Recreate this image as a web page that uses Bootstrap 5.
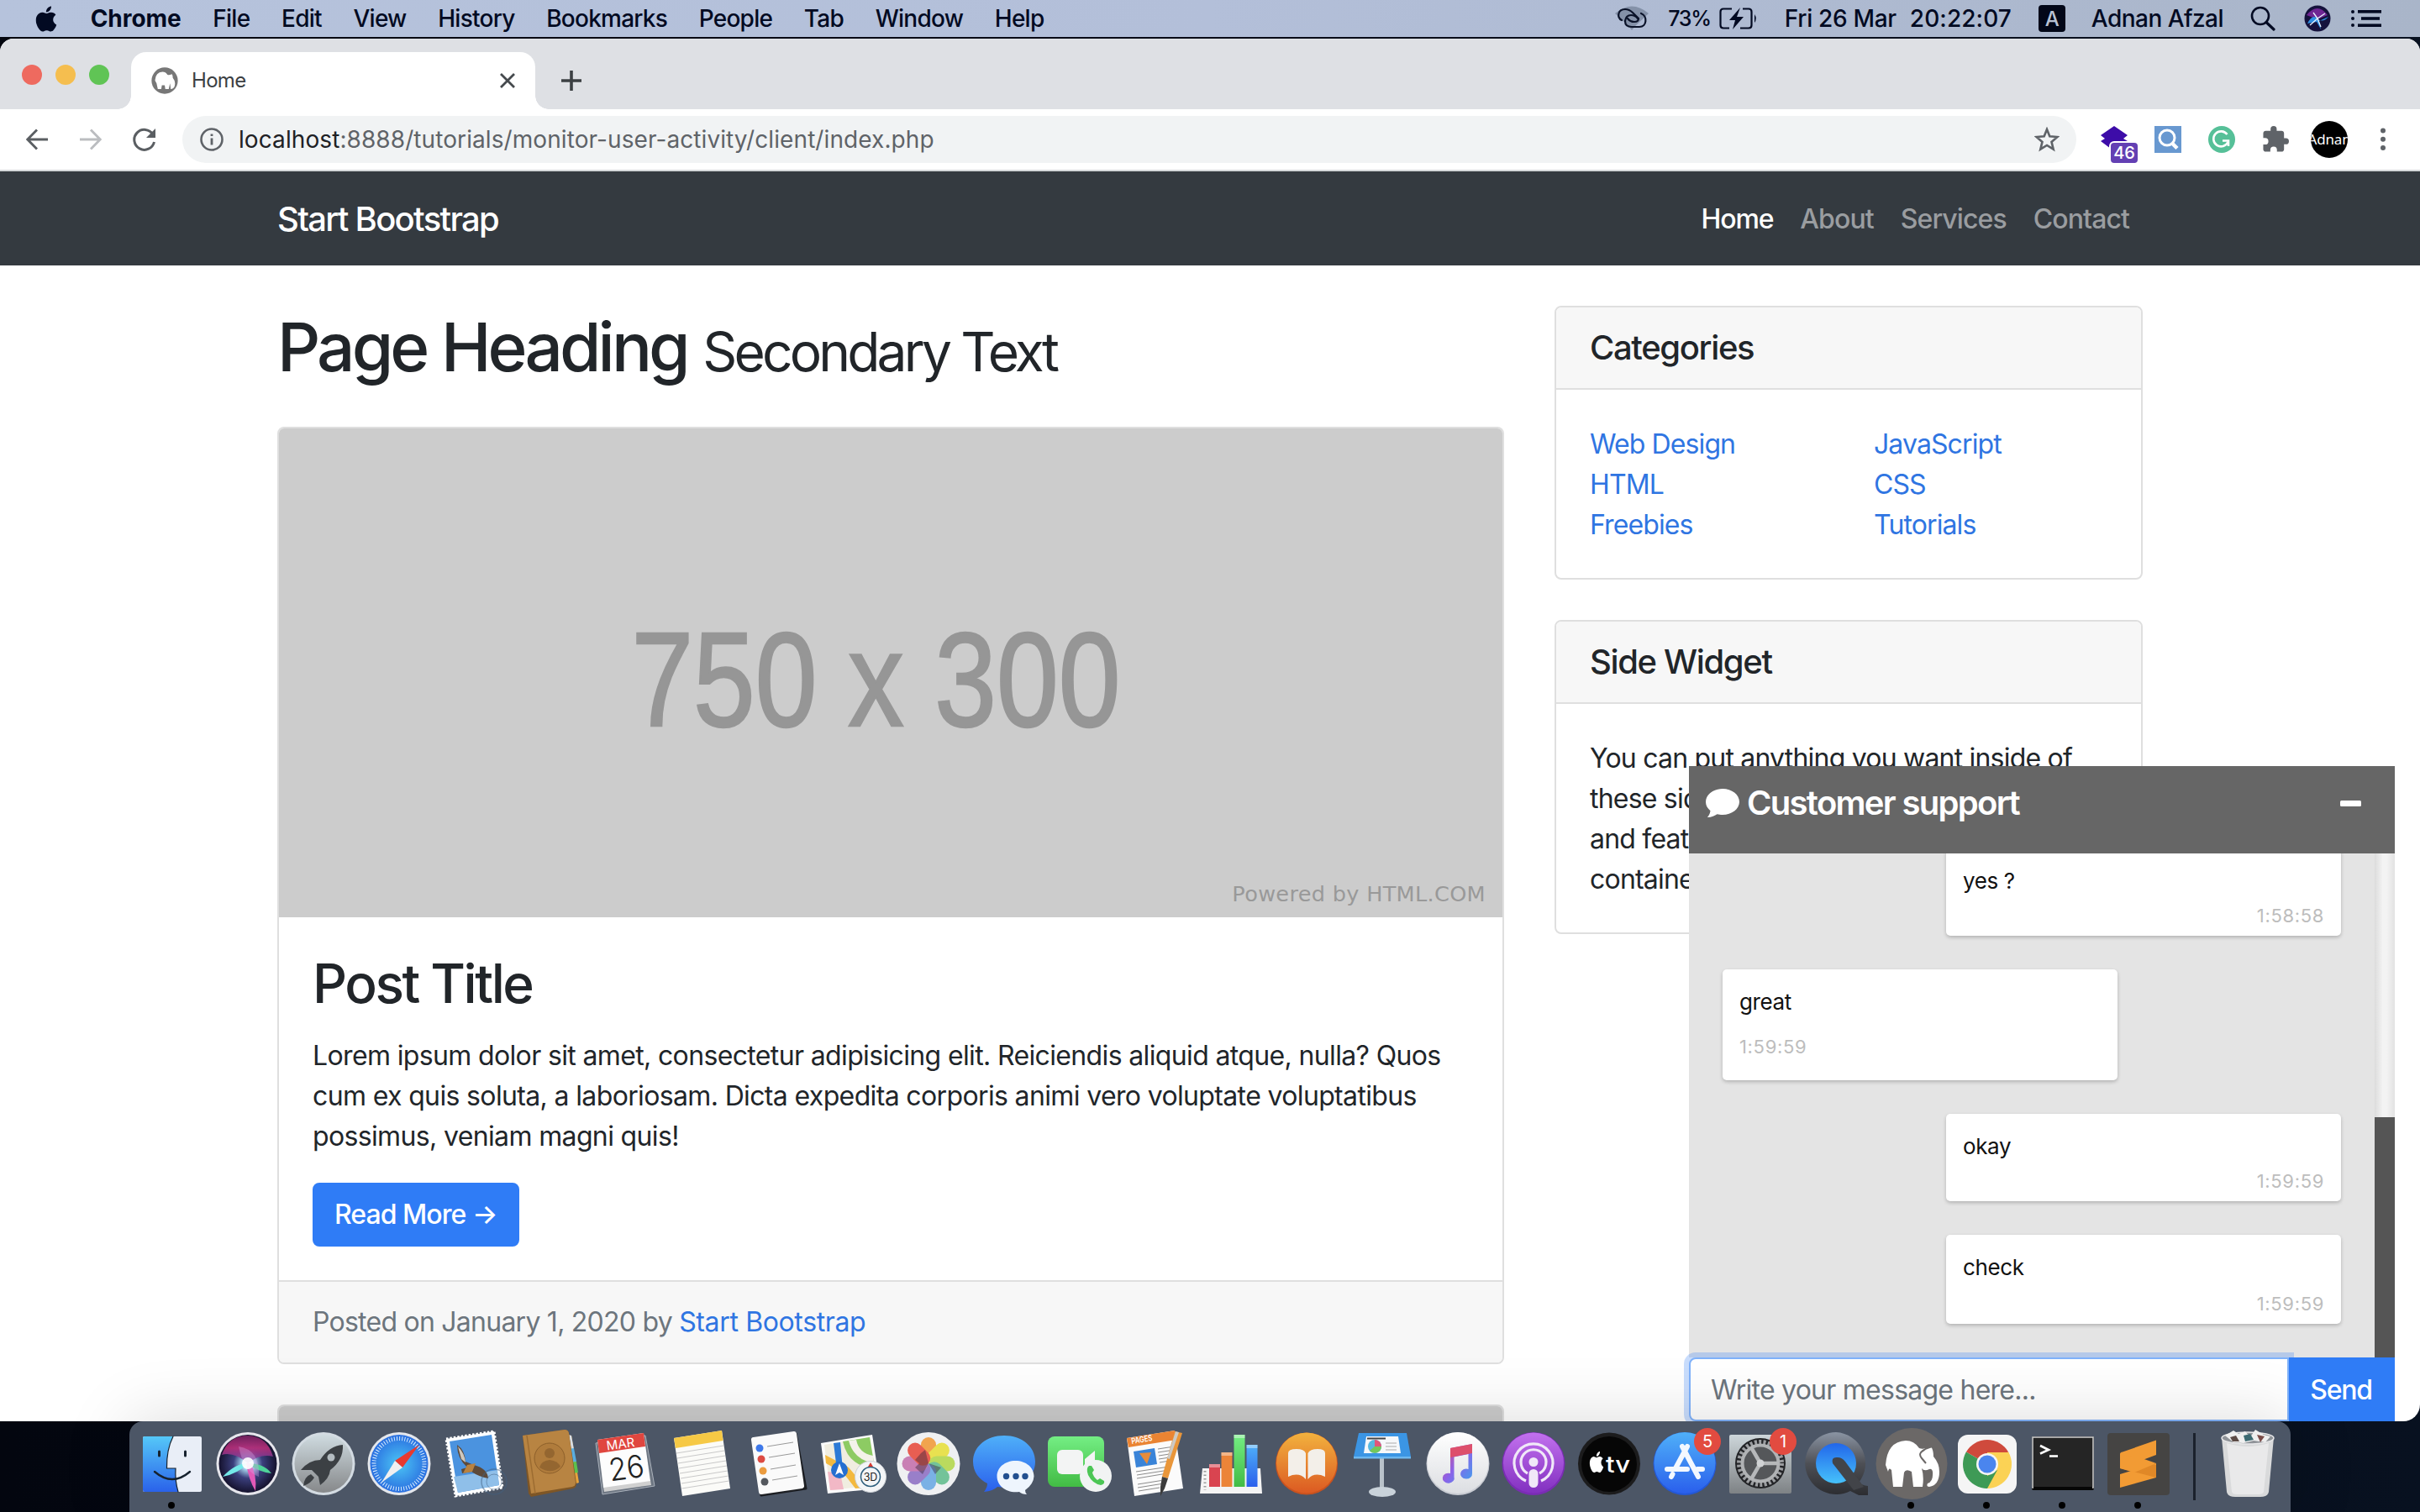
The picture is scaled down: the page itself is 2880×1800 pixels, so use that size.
<!DOCTYPE html>
<html lang="en">
<head>
<meta charset="utf-8">
<title>Home</title>
<link href="https://cdn.jsdelivr.net/npm/bootstrap@5.3.0/dist/css/bootstrap.min.css" rel="stylesheet">
<style>
html{font-size:32px}
body{width:2880px;height:1800px;overflow:hidden;font-family:Inter,Roboto,"Liberation Sans",sans-serif;letter-spacing:-.0215em;color:#212529;background:linear-gradient(90deg,#03060f,#050a16 50%,#081120)}
svg{display:block;flex:none}
a{color:#2f75e2;text-decoration:none}
.defs{position:absolute}
/* menu bar */
.menubar{height:44px;font-size:28px;line-height:44px;padding:0 46px 0 40px;background:linear-gradient(90deg,#b6c3dc,#b3bfd9 50%,#a9b5c9);color:#020a22;font-weight:450;letter-spacing:-.025em}
.menubar>div>span{white-space:pre}
.menus{gap:37.7px}
.menus .appname{font-weight:700;letter-spacing:-.002em}
.menus span+span{letter-spacing:-.027em}
.battery-pct{font-size:25px;letter-spacing:-.05em;margin:0 10px 0 23px}
/* browser window */
.browser{height:1646px;margin-top:2px;border-radius:16px 16px 20px 0;overflow:hidden;background:#fff}
.tabstrip{height:84px;background:#dee0e4;padding:16px 0 0 26px}
.light{width:24px;height:24px;border-radius:50%;margin-right:16px;margin-top:15px}
.pagetab{width:481px;height:68px;background:#fff;border-radius:18px 18px 0 0;margin-left:10px;padding:0 23px 0 24px;font-size:24px;position:relative;color:#3c4043}
.pagetab::before,.pagetab::after{content:"";position:absolute;bottom:0;width:16px;height:16px}
.pagetab::before{left:-16px;background:radial-gradient(circle at 0 0,transparent 15.5px,#fff 16px)}
.pagetab::after{right:-16px;background:radial-gradient(circle at 100% 0,transparent 15.5px,#fff 16px)}
.toolbar{height:74px;padding:0 12px;border-bottom:2px solid #d5d8da}
.cell{width:64px;height:72px;display:flex;align-items:center;justify-content:center;position:relative;flex:none}
.omnibox{height:56px;border-radius:28px;background:#f1f3f4;margin:0 13px 0 13px;padding:0 20px 0 21px;font-size:28px;color:#5f6368;letter-spacing:.003em}
.omnibox b{font-weight:400;color:#202124}
.extcount{position:absolute;left:28px;top:40px;width:32px;height:24px;border-radius:4px;background:#6340b3;box-shadow:0 0 0 2px #fff;color:#fff;font-size:20px;line-height:24px;text-align:center;font-weight:500;letter-spacing:0}
.avatar{width:44px;height:44px;border-radius:50%;background:#000;color:#fff;font-size:17px;display:flex;align-items:center;justify-content:center;overflow:hidden;font-family:"Noto Sans",sans-serif;letter-spacing:-.01em}
/* page */
.site{height:1488px;position:relative;overflow:hidden}
.container{max-width:2280px;--bs-gutter-x:60px}
.row{--bs-gutter-x:60px}
.site .navbar{background:#343a40;padding:17px 0 15px;height:112px}
.navbar-brand{font-size:40px;letter-spacing:-.0425em;font-weight:450}
.navbar .nav-link{padding:8px 16px!important;color:#9a9da0;letter-spacing:-.0285em;font-weight:450}
.navbar .nav-link.active{color:#fff;letter-spacing:-.036em;font-weight:500}
h1{font-size:80px;letter-spacing:-.0485em;margin:48px 0;line-height:96px;height:96px;padding-top:1px}
h1 small{font-size:64px;font-weight:400;letter-spacing:-.06em;line-height:1;margin-left:1px}
.card{--bs-card-border-width:2px;--bs-card-spacer-x:40px;--bs-card-spacer-y:40px;--bs-card-cap-padding-x:40px;--bs-card-cap-padding-y:24px;--bs-card-border-radius:8px;--bs-card-inner-border-radius:6px;--bs-card-cap-bg:#f7f7f7;--bs-card-border-color:#dfdfdf;margin-bottom:48px}
.placeholder-img{height:582.4px;background:#ccc;border-radius:6px 6px 0 0;position:relative;color:#969696;padding:15px 36px 0 0}
.placeholder-img .dims{font:160px "Liberation Sans",sans-serif;letter-spacing:0;transform:scaleX(.828);white-space:nowrap;-webkit-text-stroke:2.5px #969696}
.placeholder-img .by{position:absolute;right:20px;bottom:13px;font:25.6px "DejaVu Sans",sans-serif;letter-spacing:.3px;color:#999}
.card-title{font-size:64px;line-height:76.8px;margin-bottom:24px;letter-spacing:-.0385em;position:relative;top:1px}
.card-text{margin-bottom:31px;letter-spacing:-.02em}
.btn-primary{--bs-btn-bg:#2f7cf6;--bs-btn-border-color:#2f7cf6;border-radius:8px;padding:12px 24px;line-height:48px;border-width:2px;letter-spacing:-.03em;font-weight:450}
.card-footer{color:#6c757d;letter-spacing:-.0235em;line-height:48px}
.card-footer a{letter-spacing:-.0115em}
h5.card-header{font-size:40px;letter-spacing:-.034em;line-height:48px;margin:0}
.side .card:first-child{margin-top:48px}
.catlinks{letter-spacing:-.028em;padding-top:1px;margin-bottom:-1px}
.widget-text{letter-spacing:-.0248em;padding-top:41px;padding-bottom:39px}
/* chat */
.chat{position:absolute;left:2010px;top:708px;width:840px;height:780px}
.chat-head{height:104px;background:#666;color:#fff;font-size:40px;font-weight:600;letter-spacing:-.0424em;padding:0 40px 16px 20px}
.chat-log{height:600px;background:#e4e4e4}
.msgs{overflow:hidden;padding:0 40px 40px;gap:40px}
.msg{width:470px;background:#fff;border-radius:5px;box-shadow:0 2px 4px rgba(0,0,0,.22);padding:20px;font-size:26px;line-height:37px;flex:none;color:#111;letter-spacing:-.015em}
.msg time{display:block;font-size:22px;line-height:33px;color:#bdbdbd;letter-spacing:.03em;margin-top:7px}
.me{align-self:flex-end;height:104px}
.me time{text-align:right}
.them{height:132px}.them time{margin-top:19px}
.me.tall{height:106px}.me.tall time{margin-top:9px}
.track{width:24px;background:linear-gradient(90deg,#dcdcdc,#f3f3f3 40%,#f3f3f3 60%,#e2e2e2)}
.thumb{height:286px;background:#555}
.entry{width:714px;height:76px;border:2px solid #80b2fa;border-radius:8px 0 0 8px;box-shadow:0 0 0 6px rgba(47,124,246,.26);padding:1px 24px 0;color:#6c757d;background:#fff;letter-spacing:-.0235em;position:relative;clip-path:inset(-8px -6px 0 -8px)}
.send{width:126px;background:#2f7cf6;color:#fff;letter-spacing:-.038em;border:0;position:relative;z-index:1;font-weight:450;padding:2px 2px 0 0}
/* dock */
.dock{width:2572px;height:108px;margin:0 0 0 154px;padding-left:6px;background:#4c5666;border-radius:16px 16px 0 0;position:relative;box-shadow:0 0 80px rgba(0,0,0,.15);letter-spacing:0}
.dock>svg{width:90px;height:108px}
.divline{width:3px;height:80px;background:#1b212c;margin:0 17px 0 20px;flex:none}
</style>
<script src="https://cdn.jsdelivr.net/npm/bootstrap@5.3.0/dist/js/bootstrap.bundle.min.js"></script>
</head>
<body>
<svg width="0" height="0" class="defs"><defs>
<symbol id="apple" viewBox="0 0 16 16"><path d="M11.182.008C11.148-.03 9.923.023 8.857 1.18c-1.066 1.156-.902 2.482-.878 2.516s1.52.087 2.475-1.258.762-2.391.728-2.43m3.314 11.733c-.048-.096-2.325-1.234-2.113-3.422s1.675-2.789 1.698-2.854-.597-.79-1.254-1.157a3.7 3.7 0 0 0-1.563-.434c-.108-.003-.483-.095-1.254.116-.508.139-1.653.589-1.968.607-.316.018-1.256-.522-2.267-.665-.647-.125-1.333.131-1.824.328-.49.196-1.422.754-2.074 2.237-.652 1.482-.311 3.83-.067 4.56s.625 1.924 1.273 2.796c.576.984 1.34 1.667 1.659 1.899s1.219.386 1.843.067c.502-.308 1.408-.485 1.766-.472.357.013 1.061.154 1.782.539.571.197 1.111.115 1.652-.105.541-.221 1.324-1.059 2.238-2.758q.52-1.185.473-1.282"/></symbol>
<radialGradient id="siri" cx=".5" cy=".5" r=".5"><stop offset="0" stop-color="#fff"/><stop offset=".2" stop-color="#a9d8f0"/><stop offset=".5" stop-color="#3b3f7d"/><stop offset="1" stop-color="#15122e"/></radialGradient>
<linearGradient id="siritop" x1="0" y1="0" x2="0" y2="1"><stop offset="0" stop-color="#7d2263"/><stop offset=".45" stop-color="#c22f7c"/><stop offset="1" stop-color="#5c3fa0"/></linearGradient>
<linearGradient id="gsilver" x1="0" y1="0" x2="0" y2="1"><stop offset="0" stop-color="#cfdbe0"/><stop offset="1" stop-color="#86888a"/></linearGradient>
<linearGradient id="gwhite" x1="0" y1="0" x2="0" y2="1"><stop offset="0" stop-color="#fff"/><stop offset="1" stop-color="#dcdee2"/></linearGradient>
<radialGradient id="gsaf"><stop offset="0" stop-color="#4cc6f5"/><stop offset="1" stop-color="#2a6fe0"/></radialGradient>
<linearGradient id="gfind" x1="0" y1="0" x2="0" y2="1"><stop offset="0" stop-color="#55c8f8"/><stop offset="1" stop-color="#2a62ea"/></linearGradient>
<linearGradient id="gblue" x1="0" y1="0" x2="0" y2="1"><stop offset="0" stop-color="#4fb0f9"/><stop offset="1" stop-color="#2a5fec"/></linearGradient>
<linearGradient id="ggreen" x1="0" y1="0" x2="0" y2="1"><stop offset="0" stop-color="#74ee84"/><stop offset="1" stop-color="#42bb44"/></linearGradient>
<linearGradient id="gbook" x1="0" y1="0" x2="0" y2="1"><stop offset="0" stop-color="#f2b23e"/><stop offset="1" stop-color="#dc5a22"/></linearGradient>
<linearGradient id="gpod" x1="0" y1="0" x2="0" y2="1"><stop offset="0" stop-color="#c271ee"/><stop offset="1" stop-color="#8230c0"/></linearGradient>
<linearGradient id="gnote" x1="0" y1="0" x2="1" y2="1"><stop offset="0" stop-color="#e8506a"/><stop offset=".5" stop-color="#8c62e8"/><stop offset="1" stop-color="#3fa0ee"/></linearGradient>
<linearGradient id="gqt" x1="0" y1="0" x2="0" y2="1"><stop offset="0" stop-color="#8a94a3"/><stop offset=".5" stop-color="#4d4f55"/><stop offset="1" stop-color="#2c2d31"/></linearGradient>
<linearGradient id="gqi" x1="0" y1="0" x2="0" y2="1"><stop offset="0" stop-color="#2266ea"/><stop offset="1" stop-color="#46c2fb"/></linearGradient>
<linearGradient id="gset" x1="0" y1="0" x2="0" y2="1"><stop offset="0" stop-color="#cdd6da"/><stop offset="1" stop-color="#7e8285"/></linearGradient>
</defs></svg>

<div class="menubar d-flex justify-content-between">
  <div class="d-flex menus align-items-center">
    <svg width="30" height="31" fill="#020a22"><use href="#apple"/></svg>
    <span class="appname">Chrome</span><span>File</span><span>Edit</span><span>View</span><span>History</span><span>Bookmarks</span><span>People</span><span>Tab</span><span>Window</span><span>Help</span>
  </div>
  <div class="d-flex align-items-center">
    <svg width="40" height="30" viewBox="0 0 40 30"><path d="M0 9Q20-8 40 9L24 24 20 29 16 24Z" fill="#8491a8"/><g fill="none" stroke="#0a1228" stroke-width="2.200" stroke-linecap="round"><path d="M8 17C2 14 3 4 12 4Q17 4 21 8L28 15Q28 19 23 19 18 19 15 15"/><path d="M31 9C39 12 38 25 29 25H20Q12 25 12 18 13 11 19 11 24 11 27 15"/></g></svg>
    <span class="battery-pct">73%</span>
    <svg width="46" height="26" viewBox="0 0 46 26"><path d="M15 1.500H5Q1.500 1.500 1.500 5V21Q1.500 24.500 5 24.500H12M28 1.500H35Q38.500 1.500 38.500 5V21Q38.500 24.500 35 24.500H25" fill="none" stroke="#020a22" stroke-width="2.200"/><path d="M25 0L12 15H19L16 26L29 11H21Z" fill="#020a22"/><path d="M42 8Q45.500 13 42 18Z" fill="#020a22"/></svg>
    <span style="margin-left:32px;letter-spacing:-.011em">Fri 26 Mar</span><span style="margin-left:16px;letter-spacing:.003em">20:22:07</span>
    <svg width="32" height="32" style="margin:0 31px 0 32px"><rect width="32" height="32" rx="4" fill="#020718"/><text x="16" y="24.500" font-size="24" fill="#b8c2d4" text-anchor="middle">A</text></svg>
    <span style="letter-spacing:-.019em">Adnan Afzal</span>
    <svg width="30" height="30" viewBox="0 0 30 30" style="margin:0 34px 0 32px"><circle cx="12" cy="12" r="10" fill="none" stroke="#020a22" stroke-width="2.600"/><path d="M19 19.500L28 28" stroke="#020a22" stroke-width="3.200" stroke-linecap="round"/></svg>
    <svg width="32" height="32" viewBox="0 0 32 32"><circle cx="16" cy="16" r="15.500" fill="#15123c"/><path d="M3 12Q16-4 28 12L16 17Z" fill="#8e2db0" opacity=".75"/><path d="M4 22Q10 10 16 16T29 14L18 19 20 29 15 20Z" fill="#2f8fe0"/><path d="M16 16L7 24M16 16L25 10M16 16L20 26M16 16L11 9" stroke="#e8f4ff" stroke-width="1.300"/></svg>
    <svg width="36" height="20" viewBox="0 0 36 20" style="margin-left:24px"><g fill="#020a22"><circle cx="2" cy="2" r="2"/><circle cx="2" cy="10" r="2"/><circle cx="2" cy="18" r="2"/><rect x="8" width="28" height="3.600"/><rect x="12" y="8.200" width="22" height="3.600"/><rect x="8" y="16.400" width="28" height="3.600"/></g></svg>
  </div>
</div>

<div class="browser">
  <div class="tabstrip d-flex">
    <span class="light" style="background:#ee6a5f"></span><span class="light" style="background:#f5be4f"></span><span class="light" style="background:#60c455"></span>
    <div class="pagetab d-flex align-items-center">
      <svg width="32" height="32" viewBox="2 8 86 86"><circle cx="45" cy="51" r="42" fill="#777"/><path d="M14 50Q16 24 38 23Q48 23 54 32Q60 34 68 30Q71 34 71 42Q78 50 78 60Q78 76 66 78Q62 78 64 74L62 60L58 78H47L45 66H36L34 78H23L19 60Z" fill="#fff"/></svg>
      <span style="margin-left:16px">Home</span>
      <svg width="20" height="20" viewBox="0 0 20 20" class="ms-auto"><path d="M2 2L18 18M18 2L2 18" stroke="#45494d" stroke-width="2.800"/></svg>
    </div>
    <svg width="26" height="26" viewBox="0 0 26 26" style="margin:21px 0 0 30px"><path d="M13 1V25M1 13H25" stroke="#3c4043" stroke-width="3.600"/></svg>
  </div>
  <div class="toolbar d-flex align-items-center">
    <div class="cell"><svg width="26" height="26" viewBox="0 0 26 26"><path d="M26 13H2M13 1.500L1.800 13L13 24.500" fill="none" stroke="#5a5e62" stroke-width="2.800"/></svg></div>
    <div class="cell"><svg width="26" height="26" viewBox="0 0 26 26"><path d="M0 13H24M13 1.500L24.200 13L13 24.500" fill="none" stroke="#bbbdc0" stroke-width="2.800"/></svg></div>
    <div class="cell"><svg width="28" height="28" viewBox="0 0 28 28"><path d="M24 8A12 12 0 1 0 25.500 17" fill="none" stroke="#5a5e62" stroke-width="3"/><path d="M27 1V12H16Z" fill="#5a5e62"/></svg></div>
    <div class="omnibox d-flex align-items-center flex-fill">
      <svg width="28" height="28" viewBox="0 0 28 28"><circle cx="14" cy="14" r="12.500" fill="none" stroke="#5f6368" stroke-width="2.600"/><path d="M14 12.500V20.500M14 7.500V10" stroke="#5f6368" stroke-width="2.800"/></svg>
      <span style="margin-left:18px"><b>localhost</b>:8888/tutorials/monitor-user-activity/client/index.php</span>
      <svg width="30" height="30" viewBox="0 0 30 30" class="ms-auto"><path d="M15 3L18.300 11.300L27.500 12L20.500 17.900L22.700 26.700L15 22L7.300 26.700L9.500 17.900L2.500 12L11.700 11.300Z" fill="none" stroke="#5f6368" stroke-width="2.600"/></svg>
    </div>
    <div class="cell"><svg width="34" height="34" viewBox="0 0 34 34"><path d="M17 1L33 12L28 16L33 19L17 31L1 19L6 16L1 12Z" fill="#3d0ca8"/></svg><span class="extcount">46</span></div>
    <div class="cell"><svg width="32" height="32" viewBox="0 0 32 32"><rect width="32" height="32" fill="#6898d0"/><circle cx="15" cy="14" r="9" fill="none" stroke="#fff" stroke-width="3"/><path d="M20.500 20L27 26.500" stroke="#fff" stroke-width="4.500"/></svg></div>
    <div class="cell"><svg width="32" height="32" viewBox="0 0 32 32"><circle cx="16" cy="16" r="16" fill="#56c098"/><path d="M22.500 10A9 9 0 1 0 23.500 19" fill="none" stroke="#fff" stroke-width="2.600"/><path d="M17 17.500H24V24" fill="none" stroke="#fff" stroke-width="2.600"/></svg></div>
    <div class="cell"><svg width="32" height="32" viewBox="1 1 22 22"><path d="M20.500 11H19V7c0-1.100-.9-2-2-2h-4V3.500a2.500 2.500 0 0 0-5 0V5H4c-1.100 0-2 .9-2 2v3.800h1.500a2.700 2.700 0 0 1 0 5.400H2V20c0 1.100.9 2 2 2h3.800v-1.500a2.700 2.700 0 0 1 5.400 0V22H17c1.100 0 2-.9 2-2v-4h1.500a2.500 2.500 0 0 0 0-5z" fill="#5f6368"/></svg></div>
    <div class="cell"><span class="avatar">Adnan</span></div>
    <div class="cell"><svg width="6" height="28" viewBox="0 0 6 28"><g fill="#5f6368"><circle cx="3" cy="3.500" r="3"/><circle cx="3" cy="13.800" r="3"/><circle cx="3" cy="24" r="3"/></g></svg></div>
  </div>

  <div class="site">
    <nav class="navbar navbar-expand navbar-dark">
      <div class="container">
        <a class="navbar-brand" href="#">Start Bootstrap</a>
        <ul class="navbar-nav ms-auto">
          <li class="nav-item"><a class="nav-link active" href="#">Home</a></li>
          <li class="nav-item"><a class="nav-link" href="#">About</a></li>
          <li class="nav-item"><a class="nav-link" href="#">Services</a></li>
          <li class="nav-item"><a class="nav-link" href="#">Contact</a></li>
        </ul>
      </div>
    </nav>
    <div class="container">
      <div class="row">
        <div class="col-md-8">
          <h1>Page Heading <small>Secondary Text</small></h1>
          <div class="card">
            <div class="placeholder-img d-flex align-items-center justify-content-center"><span class="dims">750 x 300</span><span class="by">Powered by HTML.COM</span></div>
            <div class="card-body">
              <h2 class="card-title">Post Title</h2>
              <p class="card-text">Lorem ipsum dolor sit amet, consectetur adipisicing elit. Reiciendis aliquid atque, nulla? Quos<br>cum ex quis soluta, a laboriosam. Dicta expedita corporis animi vero voluptate voluptatibus<br>possimus, veniam magni quis!</p>
              <a href="#" class="btn btn-primary">Read More →</a>
            </div>
            <div class="card-footer">Posted on January 1, 2020 by <a href="#">Start Bootstrap</a></div>
          </div>
          <div class="card"><div class="placeholder-img"></div></div>
        </div>
        <div class="col-md-4 side">
          <div class="card">
            <h5 class="card-header">Categories</h5>
            <div class="card-body">
              <div class="row catlinks">
                <div class="col-lg-6"><ul class="list-unstyled mb-0"><li><a href="#">Web Design</a></li><li><a href="#">HTML</a></li><li><a href="#">Freebies</a></li></ul></div>
                <div class="col-lg-6"><ul class="list-unstyled mb-0"><li><a href="#">JavaScript</a></li><li><a href="#">CSS</a></li><li><a href="#">Tutorials</a></li></ul></div>
              </div>
            </div>
          </div>
          <div class="card">
            <h5 class="card-header">Side Widget</h5>
            <div class="card-body widget-text">You can put anything you want inside of<br>these side widgets. They are easy to use,<br>and feature the new Bootstrap 4 card<br>containers!</div>
          </div>
        </div>
      </div>
    </div>

    <div class="chat">
      <div class="chat-head d-flex align-items-center">
        <svg width="40" height="36" viewBox="0 0 40 36"><path d="M20 1C9 1 0 8 0 16.500c0 4.500 2.200 8 5.500 10.700C5 31 3.500 33 2 35c5 0 9-2 11.500-3.800 2 .5 4 .8 6.500.8 11 0 20-7 20-15.500S31 1 20 1Z" fill="#fff"/></svg>
        <span style="margin-left:9px">Customer support</span>
        <svg width="25" height="7" class="ms-auto"><rect width="25" height="7" rx="1.500" fill="#fff"/></svg>
      </div>
      <div class="chat-log d-flex">
        <div class="msgs flex-fill d-flex flex-column justify-content-end">
          <div class="msg me">yes ?<time>1:58:58</time></div>
          <div class="msg them">great<time>1:59:59</time></div>
          <div class="msg me">okay<time>1:59:59</time></div>
          <div class="msg me tall">check<time>1:59:59</time></div>
        </div>
        <div class="track d-flex flex-column justify-content-end"><div class="thumb"></div></div>
      </div>
      <div class="d-flex">
        <div class="entry d-flex align-items-center">Write your message here...</div>
        <button class="send">Send</button>
      </div>
    </div>
  </div>
</div>

<div class="dock d-flex align-items-center">
  <!-- Finder -->
  <svg viewBox="0 0 90 108"><rect x="10" y="18" width="70" height="66" rx="2" fill="#e9eef7"/><path d="M12 18H46Q38 34 38.500 56H49Q48 70 52 84H12Q10 84 10 82V20Q10 18 12 18Z" fill="url(#gfind)"/><g fill="none" stroke="#16222e" stroke-width="2.400" stroke-linecap="round"><path d="M29.500 36V41M60.500 36V41" stroke-width="3"/><path d="M24 60Q45 78 66 60"/><path d="M46 18Q38 34 38.500 56H49Q48 70 52 84" stroke-width="1.200"/></g><circle cx="44" cy="100" r="4" fill="#000"/></svg>
  <!-- Siri -->
  <svg viewBox="0 0 90 108"><circle cx="45" cy="50.500" r="37.500" fill="#e6e6ec"/><circle cx="45" cy="50.500" r="34.500" fill="url(#siri)"/><path d="M14 40Q22 17 45 17Q68 18 75 42Q60 38 45 50Q28 36 14 40Z" fill="url(#siritop)" opacity=".85"/><path d="M15 66Q30 50 45 50Q34 62 15 66Z" fill="#74e8e8"/><path d="M45 50Q64 50 73 62Q56 60 45 50Z" fill="#4fd29a"/><path d="M43 50Q46 70 54 83Q56 64 48 50Z" fill="#e25ab8"/><path d="M34 30Q60 34 58 66Q40 60 34 30Z" fill="#d9a6e8" opacity=".35"/><circle cx="45" cy="50" r="7" fill="#fff" opacity=".9"/></svg>
  <!-- Launchpad -->
  <svg viewBox="0 0 90 108"><circle cx="45" cy="50.500" r="37.500" fill="#d3dbe2"/><circle cx="45" cy="50.500" r="34.500" fill="url(#gsilver)"/><path d="M68 28Q52 29 41 46Q28 46 18 58L31 58L39 66L41 76Q52 68 53 58Q69 46 68 28Z" fill="#3c4044"/><path d="M30 63Q22 66 21 77Q30 74 34 67Z" fill="#3c4044"/><circle cx="54" cy="43" r="4.500" fill="#b4bcc0"/></svg>
  <!-- Safari -->
  <svg viewBox="0 0 90 108"><circle cx="45" cy="50.500" r="37.500" fill="#e4e7ec"/><circle cx="45" cy="50.500" r="34.500" fill="url(#gsaf)"/><circle cx="45" cy="50.500" r="30" fill="none" stroke="#d8ecff" stroke-width="5" stroke-dasharray="1 2.140"/><path d="M69 28L40 47L49 55Z" fill="#e8392f"/><path d="M24 73L40 47L49 55Z" fill="#f0f0f0"/></svg>
  <!-- Mail -->
  <svg viewBox="0 0 90 108"><path d="M11 21L68 12L78 79L22 89Z" fill="#fff" stroke="#fff" stroke-width="3" stroke-dasharray="2.500 2"/><path d="M15 24L65 16L74 76L25 85Z" fill="#4b93df"/><path d="M20 66L72 58L74 76L25 85Z" fill="#8fbfe9"/><path d="M24 28Q33 34 34 48L44 52Q60 56 61 68Q50 66 41 60L30 62L29 57L36 55Q24 44 24 28Z" fill="#5d4a3a"/><path d="M25 30Q33 38 34 49L29 45Z" fill="#cfc8bd"/><path d="M36 52L46 50L42 60L31 62Z" fill="#b98240"/><circle cx="68" cy="72" r="15" fill="none" stroke="#41607f" opacity=".5" stroke-width="1.500"/><circle cx="68" cy="72" r="9" fill="none" stroke="#41607f" opacity=".5"/></svg>
  <!-- Contacts -->
  <svg viewBox="0 0 90 108"><path d="M64 16L70 17L79 73L70 76Z" fill="#e8a33c"/><path d="M66 16L70 17L73 33L67 34Z" fill="#d9dde2"/><path d="M67 33L73 32L76 48L70 49Z" fill="#5aaee0"/><path d="M70 49L76 48L78 61L72 62Z" fill="#5cc04e"/><path d="M12 17L62 10Q66 10 67 14L76 74Q76 79 72 80L22 90L19 86Z" fill="#7e5626"/><path d="M12 17L62 10Q66 10 67 14L75 73Q75 77 71 78L22 86Z" fill="#b88442"/><path d="M17 17L27 86" stroke="#9c6c31" stroke-width="1.500"/><circle cx="44" cy="44" r="18" fill="#b07c3c" stroke="#8d602b"/><circle cx="44" cy="38" r="6" fill="#946630"/><path d="M32 55Q34 47 44 46Q54 47 57 54Q46 64 32 55Z" fill="#946630"/></svg>
  <!-- Calendar -->
  <svg viewBox="0 0 90 108"><path d="M9 26L68 17L79 77L17 87Z" fill="#6d7682" stroke="#aab1bb"/><path d="M18 78L74 70L75 76L19 84Z" fill="#d0d0d0"/><path d="M11 22L66 14L74 71L18 79Z" fill="#fdfdfd"/><path d="M11 22L66 14L68 30L13 38Z" fill="#e0463f"/><g transform="rotate(-8 42 45)"><text x="41" y="32" font-size="15" fill="#fff" text-anchor="middle">MAR</text><text x="44" y="69" font-size="37" font-weight="300" fill="#222" text-anchor="middle" textLength="42" lengthAdjust="spacingAndGlyphs">26</text></g></svg>
  <!-- Notes -->
  <svg viewBox="0 0 90 108"><path d="M12 20L69 11L79 80L22 89Z" fill="#fbfbf8"/><path d="M12 20L69 11L70.500 23L14 32Z" fill="#f6c945"/><path d="M15 38L71 29M16 44L72 35M17 50L73 41M18 56L74 47M19 62L75 53M20 68L76 59M21 74L77 65M21.500 80L77.500 71" stroke="#c9c9c9"/></svg>
  <!-- Reminders -->
  <svg viewBox="0 0 90 108"><path d="M18 23L67 15L79 80L26 88Z" fill="#1c1e22" stroke="#1c1e22" stroke-width="3" stroke-linejoin="round"/><path d="M17 22L65 15L74 77L26 84Z" fill="#fafafa" stroke="#fafafa" stroke-width="6" stroke-linejoin="round"/><circle cx="24" cy="32" r="4.500" fill="#3d78ea"/><circle cx="26" cy="45" r="4.500" fill="#dd4b42"/><circle cx="28" cy="59" r="4.500" fill="#eb9c3f"/><circle cx="30" cy="72" r="4.500" fill="#54585e"/><path d="M33 30L64 25M35 43L66 38M37 57L67 52M39 70L69 65" stroke="#999"/></svg>
  <!-- Maps -->
  <svg viewBox="0 0 90 108"><path d="M7 26L68 16L78 80L15 86Z" fill="#fbfbfb"/><path d="M11 28L65 19L74 76L18 82Z" fill="#f0ede0"/><path d="M33 24L65 19L71 55Q40 55 33 24Z" fill="#8dcb63"/><path d="M40 23Q46 46 70 50L69 41Q52 38 49 22Z" fill="#f4f2ea"/><path d="M12 40L40 55L60 79L48 80L34 62L13 50Z" fill="#f3b93f"/><path d="M15 60L30 62L34 81L18 82Z" fill="#f2b8c6"/><path d="M22 26L30 25L33 58H26Z" fill="#2c7ad6"/><circle cx="29" cy="58" r="10" fill="#256fd0"/><path d="M29 50L34 64L29 61L24 64Z" fill="#fff"/><circle cx="66" cy="66" r="18.500" fill="#f3f5f7" stroke="#ccd0d5"/><circle cx="66" cy="66" r="11.500" fill="none" stroke="#2b5d7c" stroke-width="1.500"/><text x="66" y="71" font-size="12.500" text-anchor="middle" fill="#222">3D</text><path d="M66 49L69 54H63Z" fill="#d43a32"/></svg>
  <!-- Photos -->
  <svg viewBox="0 0 90 108"><circle cx="45" cy="50.500" r="37.500" fill="#eff0f2"/><g opacity=".88"><rect x="36" y="19" width="18" height="31" rx="9" fill="#f29a38"/><rect x="36" y="19" width="18" height="31" rx="9" fill="#e8e03a" transform="rotate(45 45 50.500)"/><rect x="36" y="19" width="18" height="31" rx="9" fill="#b3d84a" transform="rotate(90 45 50.500)"/><rect x="36" y="19" width="18" height="31" rx="9" fill="#63bd8d" transform="rotate(135 45 50.500)"/><rect x="36" y="19" width="18" height="31" rx="9" fill="#6aa9e4" transform="rotate(180 45 50.500)"/><rect x="36" y="19" width="18" height="31" rx="9" fill="#8e70c4" transform="rotate(225 45 50.500)"/><rect x="36" y="19" width="18" height="31" rx="9" fill="#c470ac" transform="rotate(270 45 50.500)"/><rect x="36" y="19" width="18" height="31" rx="9" fill="#e84b3c" transform="rotate(315 45 50.500)"/></g><g fill="#3c2a3c" opacity=".45"><path d="M45 50L41 34L36 38L29 46L34 50L29 55L38 63L45 50L53 63L60 55L45 50L54 40Z"/></g></svg>
  <!-- Messages -->
  <svg viewBox="0 0 90 108"><path d="M45 17C24 17 8 30 8 48C8 60 15 69 25 74Q25 79 21 84Q32 83 37 78C60 82 82 69 82 48C82 30 66 17 45 17Z" fill="url(#gblue)"/><path d="M58.500 47C71 47 80.500 55 80.500 65.500Q80 75 70 82Q70 85 72 87Q66 87 63 84C48 86 36.500 77 36.500 65.500C36.500 55 46 47 58.500 47Z" fill="#eef5fd"/><g fill="#23508f"><circle cx="47.500" cy="65.500" r="3.700"/><circle cx="59" cy="65.500" r="3.700"/><circle cx="70" cy="65.500" r="3.700"/></g></svg>
  <!-- FaceTime -->
  <svg viewBox="0 0 90 108"><rect x="7" y="18" width="67" height="60" rx="8" fill="url(#ggreen)"/><rect x="18" y="34" width="31" height="29" rx="6" fill="#f3f4f4"/><path d="M51 45L63 35V62L51 54Z" fill="#f3f4f4"/><circle cx="64" cy="65" r="19" fill="#f1f3f3"/><path d="M56 53Q52 56 55 64Q60 74 70 76Q75 75 74 71L69 68L66 70Q61 66 60 61L62 58L59 53Z" fill="#4cc655"/></svg>
  <!-- Pages -->
  <svg viewBox="0 0 90 108"><path d="M11 20L68 11L78 80L20 89Z" fill="#fbfbfb"/><path d="M11 20L68 11L70 22L13 31Z" fill="#ea8433"/><text x="17" y="27" font-size="10" font-weight="600" fill="#fff" transform="rotate(-9 17 27)" textLength="25" lengthAdjust="spacingAndGlyphs">PAGES</text><path d="M19 36L44 32L47 51L22 55Z" fill="#3a84d8"/><path d="M26 38L40 37L35 51Z" fill="#e88c3c"/><path d="M48 33L64 30.500M48 37L64 34.500M49 41L65 38.500M49 45L62 43M50 49L62 47M22 60L58 54.500M23 64L58 58.500M23 68L56 62.500M24 75L52 70.500M24 79L52 74.500M25 83L50 79" stroke="#8c8c8c"/><path d="M68 12L77 14L60 68L53 66Z" fill="#e9963a"/><path d="M69 12L73 13L62 45L59 44Z" fill="#ccc9c4"/><path d="M53 66L60 68L56 80L51 89L51 78Z" fill="#3b3b3b"/></svg>
  <!-- Numbers -->
  <svg viewBox="0 0 90 108"><path d="M11 56H80L82 86H8Z" fill="#f4f4f4"/><path d="M14 59V82" stroke="#999" stroke-width="3" stroke-dasharray="1.500 3"/><rect x="19" y="51" width="13" height="27" fill="#d94450"/><rect x="33.500" y="37" width="13" height="41" fill="#ec8438"/><rect x="48.500" y="16" width="13" height="62" fill="url(#ggreen)"/><rect x="63.500" y="28" width="13" height="50" fill="url(#gblue)"/><path d="M19 51H32V55H19ZM33.500 37H46.500V41H33.500ZM48.500 16H61.500V20H48.500ZM63.500 28H76.500V32H63.500Z" fill="#fff" opacity=".4"/></svg>
  <!-- Books -->
  <svg viewBox="0 0 90 108"><circle cx="45" cy="50.500" r="37" fill="#c9521e"/><circle cx="45" cy="49.500" r="36" fill="url(#gbook)"/><path d="M44 38Q42 33 33 33Q23 33 23 38V66Q36 60 44 69ZM46.500 38Q49 33 58 33Q67 33 67 38V66Q54 60 46.500 69Z" fill="#f3efe9"/></svg>
  <!-- Keynote -->
  <svg viewBox="0 0 90 108"><rect x="42" y="44" width="5" height="40" fill="#b9c2ca"/><ellipse cx="45" cy="84" rx="16" ry="6" fill="#c9d2da"/><path d="M17 14H74L79 42V44H11V42Z" fill="#3b95e4"/><path d="M11 42H79V44.500H11Z" fill="#6cb8f0"/><path d="M26 18H64L67 38H23Z" fill="#f6f8fa"/><circle cx="36" cy="30" r="8" fill="#57b8e0"/><path d="M36 30V22A8 8 0 0 1 44 30Z" fill="#e0567a"/><path d="M36 30H44A8 8 0 0 1 30 35Z" fill="#74c75b"/><path d="M27 20.500H49" stroke="#444" stroke-width="2"/><path d="M49 26H62M49 30H62M49 34H62" stroke="#aaa"/></svg>
  <!-- Music -->
  <svg viewBox="0 0 90 108"><circle cx="45" cy="50.500" r="37.500" fill="#c9ccd3"/><circle cx="45" cy="49.500" r="36.500" fill="url(#gwhite)"/><path d="M36 32L62 27V62A7 6 0 1 1 57.500 57V39L40.500 42.500V66A7 6 0 1 1 36 62Z" fill="url(#gnote)"/><path d="M36 32L62 27V38L36 43Z" fill="#dd4f6c"/></svg>
  <!-- Podcasts -->
  <svg viewBox="0 0 90 108"><circle cx="45" cy="50.500" r="37.500" fill="#7a2cb4"/><circle cx="45" cy="49.500" r="36" fill="url(#gpod)"/><g fill="none" stroke="#f0e8f8" stroke-width="3.200"><path d="M36 71A23 23 0 1 1 54 71"/><path d="M38 62A15 15 0 1 1 52 62"/></g><circle cx="45" cy="48.500" r="5.500" fill="#f0e8f8"/><rect x="39.500" y="57" width="11" height="22" rx="5.500" fill="#f0e8f8"/></svg>
  <!-- TV -->
  <svg viewBox="0 0 90 108"><circle cx="45" cy="50.500" r="37" fill="#1c1c1d"/><circle cx="45" cy="51" r="33" fill="#060606"/><svg x="20" y="36" width="20" height="25" fill="#fff" viewBox="0 0 16 16" preserveAspectRatio="none"><use href="#apple"/></svg><text x="41" y="60.500" font-size="27" font-weight="500" fill="#fff" textLength="29" lengthAdjust="spacingAndGlyphs">tv</text></svg>
  <!-- App Store -->
  <svg viewBox="0 0 90 108"><circle cx="45" cy="50.500" r="37.500" fill="#2358d8"/><circle cx="45" cy="49.500" r="36.500" fill="url(#gblue)"/><g stroke="#f3f8ff" stroke-width="6" stroke-linecap="round" fill="none"><path d="M48 30L34 56M42 30L61 66"/><path d="M24 57H48M60 57H66"/><path d="M30.500 63L29 66"/></g><circle cx="72" cy="24" r="16" fill="#e24b40"/><text x="72" y="31" font-size="20" text-anchor="middle" fill="#fff">5</text></svg>
  <!-- System Preferences -->
  <svg viewBox="0 0 90 108"><rect x="8" y="16" width="74" height="70" rx="2" fill="url(#gset)"/><circle cx="45" cy="50" r="30" fill="#232427"/><circle cx="45" cy="50" r="25" fill="none" stroke="#9b9da0" stroke-width="6" stroke-dasharray="3 2.240"/><circle cx="45" cy="50" r="21.500" fill="#55575a" stroke="#b0b2b4" stroke-width="4"/><path d="M45 50L34 31M45 50H67M45 50L34 69" stroke="#b6b8ba" stroke-width="4.500"/><circle cx="45" cy="50" r="4.500" fill="#d0d2d4"/><circle cx="72" cy="24" r="16" fill="#e24b40"/><text x="72" y="31" font-size="20" text-anchor="middle" fill="#fff">1</text></svg>
  <!-- QuickTime -->
  <svg viewBox="0 0 90 108"><path d="M45 13A37 37 0 1 0 62 83Q68 86 72 88L83 88V77Q76 76 72 73A37 37 0 0 0 45 13Z" fill="url(#gqt)"/><circle cx="45" cy="50" r="24" fill="url(#gqi)"/><path d="M41 50Q39 42 47 43Q52 43 56 48L78 78L66 82Z" fill="#424449"/></svg>
  <!-- MAMP -->
  <svg viewBox="0 0 90 108"><circle cx="45" cy="50.500" r="42.500" fill="#6b6867"/><path d="M14 52Q16 24 38 23Q48 23 54 32Q60 34 68 30Q71 34 71 42Q78 50 78 60Q78 76 66 78Q62 78 64 74Q71 72 70 60Q69 56 66 57Q60 60 57 56Q60 66 58 78H47L45 60Q38 56 36 61L34 78H23L21 58Q18 54 17 60Z" fill="#fff"/><path d="M70 30Q62 32 60 34Q52 38 57 44L62 50" fill="none" stroke="#6b6867" stroke-width="2"/><circle cx="44" cy="100" r="4" fill="#000"/></svg>
  <!-- Chrome -->
  <svg viewBox="0 0 90 108"><rect x="10" y="16" width="70" height="70" rx="12" fill="#f5f5f5"/><path d="M45 51L19.900 36.500A29 29 0 0 1 70.100 36.500Z" fill="#cf4a3c"/><path d="M45 51L70.100 36.500A29 29 0 0 1 45 80Z" fill="#fbd255"/><path d="M45 51L45 80A29 29 0 0 1 19.900 36.500Z" fill="#3e9a56"/><path d="M45 37H70.500L74 50L45 64Z" fill="#fbd255"/><path d="M19.900 36.500L32 57L45 65L57 58L45 80Q30 76 24 70Z" fill="#3e9a56"/><circle cx="45" cy="51" r="13" fill="#f5f5f5"/><circle cx="45" cy="51" r="10.500" fill="#4a85ee"/><circle cx="44" cy="100" r="4" fill="#000"/></svg>
  <!-- Terminal -->
  <svg viewBox="0 0 90 108"><rect x="8" y="18" width="74" height="64" rx="2" fill="#0a0a0a"/><rect x="9" y="19" width="72" height="60" fill="#252525" stroke="#d5d5d5" stroke-width="1.500"/><path d="M10 78H80V82H10Z" fill="#060606"/><path d="M18 29L28 34L18 38.500" fill="none" stroke="#fff" stroke-width="2.600"/><path d="M29 41.500H39" stroke="#fff" stroke-width="2.600"/><circle cx="44" cy="100" r="4" fill="#000"/></svg>
  <!-- Sublime Text -->
  <svg viewBox="0 0 90 108"><rect x="8" y="14" width="74" height="74" rx="4" fill="#454443"/><path d="M66 50V67L23 79V63Z" fill="#f29b34"/><path d="M23 40L66 52V67L23 56Z" fill="#e08827"/><path d="M66 22.500V40L23 56V39Q23 37 26 36.500Z" fill="#f29b34"/><path d="M23 40V56L40 61L66 50L46 43Z" fill="#f29b34"/><circle cx="44" cy="100" r="4" fill="#000"/></svg>
  <span class="divline"></span>
  <!-- Trash -->
  <svg viewBox="0 0 90 108"><path d="M14 19L76 19L70 84Q69 90 60 90H30Q21 90 20 84Z" fill="#d9dadb"/><path d="M20 26L26 84Q27 87 32 87H58Q63 87 64 84L70 26Q45 34 20 26Z" fill="#e9e9ea"/><ellipse cx="45" cy="20" rx="31" ry="7" fill="#8f9398" stroke="#e8e8ea" stroke-width="1.500"/><path d="M18 17L28 11L34 15L42 12L48 19L54 10L64 16L72 18L66 25L52 23L40 26L28 25Z" fill="#efefef"/><path d="M24 19L31 17L35 24L27 24Z" fill="#5c4b46"/><path d="M40 17L48 15L52 22L42 24Z" fill="#3c6a72"/><path d="M56 16L65 18L60 25Z" fill="#7a4c48"/></svg>
</div>
</body>
</html>
